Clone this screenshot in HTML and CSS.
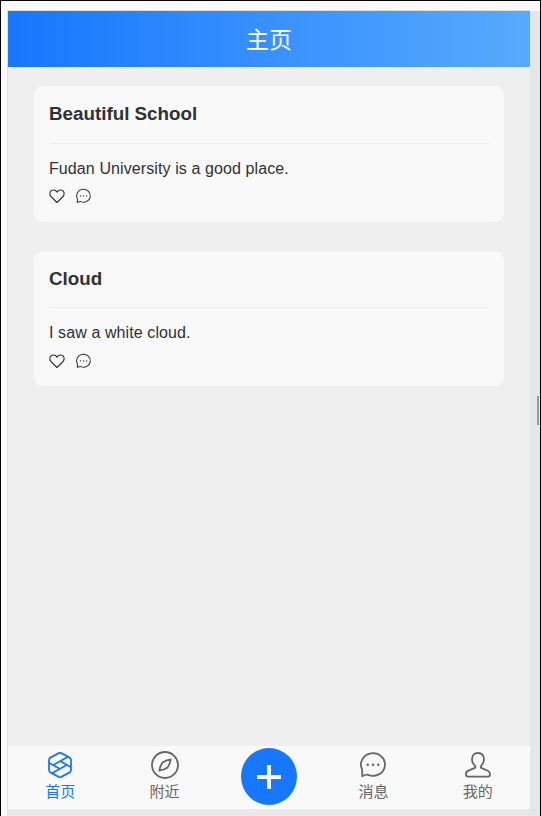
FILE: index.html
```
<!DOCTYPE html>
<html lang="zh-CN">
<head>
<meta charset="utf-8">
<title>主页</title>
<link rel="stylesheet" href="styles.css">
</head>
<body>
<svg width="0" height="0" class="defs">
  <symbol id="heart" viewBox="0 0 16 16"><path d="M8 14.500 2.400 9C-.4 6 1 2 4.400 2 6.200 2 7.300 2.900 8 4.100 8.700 2.900 9.800 2 11.600 2c3.400 0 4.800 4 2 7Z"/></symbol>
  <symbol id="chat" viewBox="0 0 28 28"><path d="M3.200 25.200V18.500A12 11.300 0 1 1 9 23.800Q7 23.200 3.200 25.200Z"/><path class="dots" d="M8.700 13.800h.01M14 13.800h.01M19.300 13.800h.01"/></symbol>
</svg>
<div class="window">
  <div class="phone">
    <header class="topbar">主页</header>
    <main class="feed">
      <article class="card">
        <h2>Beautiful School</h2>
        <p>Fudan University is a good place.</p>
        <div class="actions"><svg><use href="#heart"/></svg><svg class="comment"><use href="#chat"/></svg></div>
      </article>
      <article class="card">
        <h2>Cloud</h2>
        <p>I saw a white cloud.</p>
        <div class="actions"><svg><use href="#heart"/></svg><svg class="comment"><use href="#chat"/></svg></div>
      </article>
    </main>
    <nav class="tabs">
      <a class="tab active"><svg viewBox="0 0 28 28"><path d="M12.700 2.100Q14 1.500 15.300 2.100L23.600 6.600Q25 7.400 25 9v10q0 1.600-1.400 2.400L15.300 25.900Q14 26.500 12.700 25.900L4.400 21.400Q3 20.600 3 19V9Q3 7.400 4.400 6.600ZM7.300 14 22 5.700M20.700 14 6 22.300M3 11.800 14 18M25 16.200 14 10"/></svg><span>首页</span></a>
      <a class="tab"><svg viewBox="0 0 28 28"><circle cx="14" cy="14" r="13"/><path d="M19.700 8.300Q19 13 16.500 16.500 13 19 8.300 19.700 9 15 11.500 11.500 15 9 19.700 8.300Z"/></svg><span>附近</span></a>
      <a class="tab"><span class="add"><svg viewBox="0 0 24 24"><path d="M12 0v24M0 12h24"/></svg></span></a>
      <a class="tab"><svg viewBox="0 0 28 28"><use href="#chat"/></svg><span>消息</span></a>
      <a class="tab"><svg viewBox="0 0 28 28"><path d="M14 2C9.800 2 8 5 8 8.200c0 3 1.300 5 3 6.600.8.900.5 1.900-.6 2.400l-6 2.500C2.600 20.400 2 21.500 2 23v.6Q2 25.600 4 25.600h20q2 0 2-2V23c0-1.500-.6-2.600-2.200-3.300l-6-2.500c-1.100-.5-1.400-1.500-.6-2.400 1.500-1.600 2.800-3.600 2.800-6.600C20 5 18.200 2 14 2Z"/></svg><span>我的</span></a>
    </nav>
  </div>
  <div class="scroll"><div class="thumb"></div></div>
</div>
</body>
</html>
```
FILE: styles.css
```
* { box-sizing: border-box; }
body { margin: 0; color: #303133; font-family: "Liberation Sans", "Noto Sans CJK SC", sans-serif; }
.defs { position: absolute; }
.window {
  height: 816px;
  display: flex;
  padding: 9px 0 0 6px;
  border: 1px solid #000;
  border-bottom: 0;
  background: #fafafa;
  overflow: hidden;
}
.phone {
  width: 523px;
  height: 806px;
  display: flex;
  flex-direction: column;
  border-left: 1px solid #e2e2e2;
  border-top: 1px solid #dedede;
  border-bottom: 7px solid #e8e8e8;
  background: #efefef;
}
.topbar {
  height: 56px;
  line-height: 59px;
  text-align: center;
  font-size: 23px;
  color: #fff;
  background: linear-gradient(90deg, #1677ff, #58aafc);
}
.feed { flex: 1; padding: 19px 26px 0; }
.card {
  height: 136px;
  margin-bottom: 29px;
  padding: 0 15px;
  border-radius: 9px;
  background: #f9f9f9;
}
.card + .card { height: 135px; }
.card h2 {
  height: 58px;
  margin: 0;
  line-height: 55px;
  font-size: 18.8px;
  border-bottom: 1px solid #eee;
}
.card + .card h2 { height: 57px; }
.card p { margin: 0; padding-top: 15px; font-size: 16px; line-height: 20px; letter-spacing: 0.1px; }
.actions { display: flex; gap: 10px; padding-top: 9px; }
.card + .card .actions { padding-top: 10px; }
svg { fill: none; stroke: currentColor; stroke-linejoin: round; }
.actions svg { width: 16px; height: 16px; stroke-width: 1.1; }
.actions .comment { width: 17px; stroke-width: 1.8; }
.dots { stroke-linecap: round; stroke-width: 2.5; }
.tabs { height: 63px; display: flex; background: #f9f9f9; color: #666; }
.tab { flex: 1; display: flex; flex-direction: column; align-items: center; padding-top: 5px; }
.tab.active { color: #1677ff; }
.tab > svg { width: 28px; height: 28px; stroke-width: 1.8; }
.tab > span:not(.add) { font-size: 15px; line-height: 25px; }
.add {
  width: 56px;
  height: 57px;
  margin-top: -3px;
  display: flex;
  align-items: center;
  justify-content: center;
  border-radius: 50%;
  background: #1677ff;
  color: #fff;
}
.add svg { width: 24px; height: 24px; stroke-width: 4; }
.scroll { width: 10px; height: 806px; margin-top: 1px; background: #e5e6e8; }
.thumb { width: 2px; height: 29px; margin: 385px 0 0 7px; background: #999; }
```
